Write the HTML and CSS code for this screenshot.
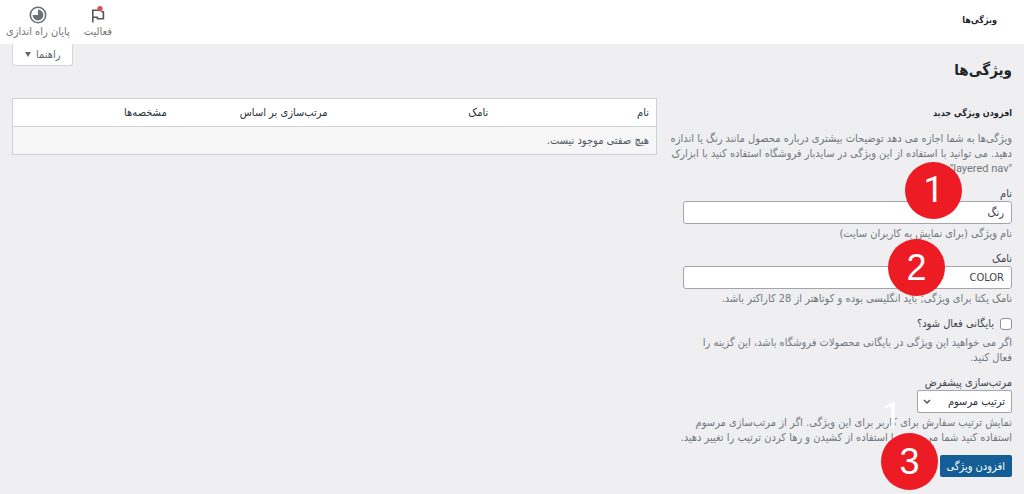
FILE: index.html
```html
<!DOCTYPE html>
<html lang="fa" dir="rtl">
<head>
<meta charset="UTF-8">
<meta name="viewport" content="width=device-width, initial-scale=1.0">
<title>ویژگی‌ها</title>
<link rel="stylesheet" href="styles.css">
</head>
<body>
<header class="top-bar">
  <div class="top-title">ویژگی‌ها</div>
  <div class="top-tabs">
    <button class="tab-button" type="button">
      <svg width="18" height="18" viewBox="0 0 18 18" fill="none" stroke="#50575e" stroke-width="1.6">
        <path d="M3.8 16.5V4.2h5.4M3.8 11.2h4.6v1.6h6V5.8h-2"/>
        <circle cx="11" cy="2.8" r="2.7" fill="#d94f5c" stroke="none"/>
      </svg>
      <span>فعالیت</span>
    </button>
    <button class="tab-button" type="button">
      <svg width="18" height="18" viewBox="0 0 18 18">
        <circle cx="9" cy="9" r="7.7" fill="none" stroke="#6b7075" stroke-width="1.6"/>
        <path d="M9 9V3.6A5.4 5.4 0 1 1 3.6 9z" fill="#6b7075"/>
      </svg>
      <span>پایان راه اندازی</span>
    </button>
  </div>
</header>

<main class="wrap">
  <div class="heading-row">
    <h1>ویژگی‌ها</h1>
    <button class="help-button" type="button">راهنما <span class="arrow"></span></button>
  </div>

  <div class="columns">
    <!-- فرم افزودن ویژگی -->
    <form class="attribute-form">
      <h2>افزودن ویژگی جدید</h2>
      <p class="intro">ویژگی‌ها به شما اجازه می دهد توضیحات بیشتری درباره محصول مانند رنگ یا اندازه<br>دهید. می توانید با استفاده از این ویژگی در سایدبار فروشگاه استفاده کنید با ابزارک<br><span class="latin">"layered nav"</span></p>

      <div class="field">
        <label for="attribute_label">نام</label>
        <input class="text-input" type="text" id="attribute_label" value="رنگ">
        <p>نام ویژگی (برای نمایش به کاربران سایت)</p>
        <span class="step step-one">1</span>
      </div>

      <div class="field">
        <label for="attribute_name">نامک</label>
        <input class="text-input" type="text" id="attribute_name" value="COLOR">
        <p>نامک یکتا برای ویژگی; باید انگلیسی بوده و کوتاهتر از 28 کاراکتر باشد.</p>
        <span class="step step-two">2</span>
      </div>

      <div class="field check-field">
        <label class="check-label" for="attribute_public"><input type="checkbox" id="attribute_public">بایگانی فعال شود؟</label>
        <p>اگر می خواهید این ویژگی در بایگانی محصولات فروشگاه باشد، این گزینه را<br>فعال کنید.</p>
      </div>

      <div class="field">
        <label for="attribute_orderby">مرتب‌سازی پیشفرض</label>
        <div class="select-box">
          <select id="attribute_orderby">
            <option>ترتیب مرسوم</option>
          </select>
          <svg width="8" height="6" viewBox="0 0 8 6" fill="none" stroke="#50575e" stroke-width="1.5"><path d="M1 1l3 3 3-3"/></svg>
        </div>
        <p>نمایش ترتیب سفارش برای کاربر برای این ویژگی. اگر از مرتب‌سازی مرسوم<br>استفاده کنید شما می توانید با استفاده از کشیدن و رها کردن ترتیب را تغییر دهید.</p>
        <span class="ghost-step">1</span>
      </div>

      <div class="submit">
        <button class="submit-button" type="submit">افزودن ویژگی</button>
        <span class="step step-three">3</span>
      </div>
    </form>

    <!-- جدول ویژگی ها -->
    <div class="table-column">
      <table class="attributes-table">
        <thead>
          <tr>
            <th>نام</th>
            <th>نامک</th>
            <th>مرتب‌سازی بر اساس</th>
            <th>مشخصه‌ها</th>
          </tr>
        </thead>
        <tbody>
          <tr>
            <td colspan="4">هیچ صفتی موجود نیست.</td>
          </tr>
        </tbody>
      </table>
    </div>
  </div>
</main>
</body>
</html>
```

FILE: styles.css
```css
* {
    box-sizing: border-box;
}

body {
    margin: 0;
    background-color: #efeff2;
    color: #3c434a;
    font-family: "DejaVu Sans Condensed", "DejaVu Sans", sans-serif;
    font-size: 11px;
    line-height: 15px;
}

button, input, select {
    font-family: inherit;
    font-size: 11px;
    color: inherit;
}

h1, h2, p {
    margin: 0;
}

/* نوار بالا */
.top-bar {
    display: flex;
    justify-content: space-between;
    height: 44px;
    padding: 0 27px 0 3px;
    background-color: #fff;
}

.top-title {
    padding-top: 13px;
    font-size: 9px;
    font-weight: bold;
    color: #1d2327;
}

.top-tabs {
    display: flex;
    gap: 8px;
}

.tab-button {
    display: flex;
    flex-direction: column;
    align-items: center;
    gap: 1px;
    padding: 6px 3px 0;
    border: 0;
    background: none;
    color: #757575;
    white-space: nowrap;
    cursor: pointer;
}

/* بدنه صفحه */
.wrap {
    padding: 0 12px 18px;
}

.heading-row {
    display: flex;
    justify-content: space-between;
    align-items: flex-start;
    height: 54px;
}

h1 {
    padding-top: 14px;
    font-size: 15px;
    font-weight: bold;
    line-height: 24px;
    color: #1d2327;
}

.help-button {
    display: flex;
    align-items: center;
    gap: 5px;
    height: 22px;
    padding: 0 12px;
    border: 1px solid #d5d6d9;
    border-top: 0;
    border-radius: 0 0 3px 3px;
    background-color: #fff;
    color: #646970;
    cursor: pointer;
}

.arrow {
    border: 3px solid transparent;
    border-top: 5px solid #646970;
    border-bottom: 0;
}

.columns {
    display: flex;
    align-items: flex-start;
    gap: 18px;
}

.attribute-form {
    flex: 0 0 337px;
    min-width: 0;
    padding-top: 8px;
}

h2 {
    font-size: 9px;
    line-height: 15px;
    color: #1d2327;
}

.attribute-form p {
    color: #72777c;
    white-space: nowrap;
}

.attribute-form .intro {
    margin: 10px 0;
}

.latin {
    font-family: Roboto, sans-serif;
}

/* فیلدها */
.field {
    position: relative;
    margin-bottom: 10px;
    padding-left: 8px;
}

.field label {
    display: block;
}

.field p {
    margin-top: 2px;
}

.check-field p {
    margin-top: 4px;
}

.text-input {
    display: block;
    width: 100%;
    height: 23px;
    padding: 0 7px;
    border: 1px solid #a3a5a9;
    border-radius: 3px;
    background-color: #fff;
}

.field .check-label {
    display: flex;
    align-items: center;
    gap: 6px;
}

input[type="checkbox"] {
    appearance: none;
    width: 12px;
    height: 12px;
    margin: 0;
    border: 1px solid #8c8f94;
    border-radius: 3px;
    background-color: #fff;
}

input[type="checkbox"]:checked {
    background-color: #135e96;
}

.select-box {
    display: grid;
    width: 95px;
    align-items: center;
}

.select-box select,
.select-box svg {
    grid-area: 1 / 1;
}

.select-box select {
    appearance: none;
    width: 100%;
    height: 23px;
    padding: 0 6px 0 20px;
    border: 1px solid #a3a5a9;
    border-radius: 2px;
    background-color: #fff;
    color: #2c3338;
}

.select-box svg {
    justify-self: end;
    margin-left: 6px;
    pointer-events: none;
}

.submit {
    position: relative;
}

.submit-button {
    display: block;
    height: 22px;
    padding: 0 7px;
    border: 0;
    border-radius: 2px;
    background-color: #135e96;
    color: #fff;
    cursor: pointer;
}

/* شماره مراحل */
.step {
    position: absolute;
    display: flex;
    align-items: center;
    justify-content: center;
    width: 57px;
    height: 57px;
    border-radius: 50%;
    background-color: #ed1c24;
    color: #fff;
    font-family: "Liberation Sans", Arial, sans-serif;
    font-size: 36px;
}

.step-one {
    top: -24px;
    right: 50px;
    font-family: Roboto, sans-serif;
}

.step-two {
    top: -12px;
    right: 67px;
}

.step-three {
    top: -22px;
    right: 74px;
}

.ghost-step {
    position: absolute;
    top: 34px;
    right: 110px;
    color: #fff;
    font-family: Roboto, sans-serif;
    font-size: 36px;
}

/* جدول */
.table-column {
    flex: 1;
    min-width: 0;
}

.attributes-table {
    width: 100%;
    table-layout: fixed;
    border: 1px solid #d0d1d4;
    border-spacing: 0;
    background-color: #fff;
}

.attributes-table th,
.attributes-table td {
    padding: 6px 7px;
    text-align: right;
    font-weight: normal;
}

.attributes-table th {
    border-bottom: 1px solid #d0d1d4;
    color: #2c3338;
}

.attributes-table td {
    background-color: #f6f6f7;
    color: #50575e;
}
```
